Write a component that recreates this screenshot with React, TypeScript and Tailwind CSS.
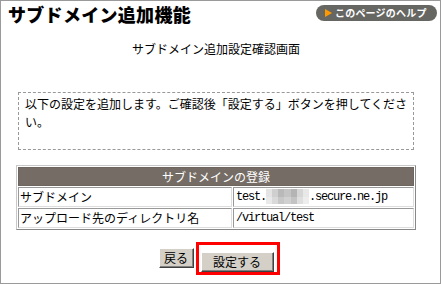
import type { JSX } from "react";

const jp = "font-['Noto_Sans_CJK_JP',sans-serif]";
const mono = "font-['Liberation_Mono','Noto_Sans_CJK_JP',monospace] tracking-[-1.2px]";

const Mosaic = (): JSX.Element => {
  const cols = ["#e4e4e4", "#cfcfcf", "#b9b9b9", "#c4c4c4", "#b4b4b4", "#d6d6d6", "#e8e8e8"];
  return (
    <span className="inline-flex h-[15px] w-[43px] align-middle">
      {cols.map((c, i) => (
        <span key={i} className="flex h-full flex-1 flex-col">
          <span className="flex-1" style={{ backgroundColor: c }} />
          <span className="flex-1 opacity-80" style={{ backgroundColor: c }} />
        </span>
      ))}
    </span>
  );
};

const App = (): JSX.Element => {
  return (
    <div className={`h-[284px] w-[441px] border border-[#9a9a9a] bg-white text-black ${jp}`}>
      <div className="flex items-start justify-between pl-[7px] pr-[3px] pt-[4px]">
        <h1 className="text-[18px] font-black leading-[18px] tracking-[0.3px]">サブドメイン追加機能</h1>
        <a className="flex h-[16px] w-[121px] items-center rounded-full bg-[#666663] pl-[9px] text-[10px] font-bold leading-none tracking-[0.2px] text-white">
          <span className="mr-[3px] h-0 w-0 border-y-[4px] border-l-[7px] border-y-transparent border-l-[#ff9900]" />
          このページのヘルプ
        </a>
      </div>

      <div className="ml-[15px] w-[400px]">
        <p className="mt-[20px] text-center text-[12px] leading-[12px]">サブドメイン追加設定確認画面</p>

        <div className="mx-[2px] mt-[37px] h-[58px] border border-dashed border-[#999] pl-[6px] pr-[3px] pt-[2px] text-[12px] leading-[18px]">
          以下の設定を追加します。ご確認後「設定する」ボタンを押してください。
        </div>

        <table className="mt-[15px] w-full border-separate border-spacing-[1px] border border-t-[#c8c8c8] border-l-[#c8c8c8] border-r-[#888] border-b-[#888] text-[12px]">
          <thead>
            <tr>
              <th colSpan={2} className="h-[19px] border border-[#6e655e] bg-[#756c65] p-0 text-center font-normal leading-[17px] text-white">
                サブドメインの登録
              </th>
            </tr>
          </thead>
          <tbody>
            <tr>
              <td className="h-[20px] w-[214px] border border-t-[#999] border-l-[#999] border-r-[#ddd] border-b-[#ddd] px-[1px] py-0 leading-[18px]">
                サブドメイン
              </td>
              <td className={`h-[20px] border border-t-[#999] border-l-[#999] border-r-[#ddd] border-b-[#ddd] px-[2px] py-0 leading-[18px] ${mono}`}>
                test.<Mosaic />.secure.ne.jp
              </td>
            </tr>
            <tr>
              <td className="h-[20px] border border-t-[#999] border-l-[#999] border-r-[#ddd] border-b-[#ddd] px-[1px] py-0 leading-[18px]">
                アップロード先のディレクトリ名
              </td>
              <td className={`h-[20px] border border-t-[#999] border-l-[#999] border-r-[#ddd] border-b-[#ddd] px-[2px] py-0 leading-[18px] ${mono}`}>
                /virtual/test
              </td>
            </tr>
          </tbody>
        </table>

        <div className="mt-[18px] flex justify-center gap-[7px]">
          <button className="h-[20px] w-[35px] border border-t-white border-l-white border-r-[#404040] border-b-[#404040] bg-[#d4d0c8] p-0 text-[12px] leading-none shadow-[inset_-1px_-1px_0_#808080]">
            戻る
          </button>
          <div className="relative">
            <button className="h-[20px] w-[73px] border border-t-white border-l-white border-r-[#404040] border-b-[#404040] bg-[#d4d0c8] p-0 text-[12px] leading-none shadow-[inset_-1px_-1px_0_#808080]">
              設定する
            </button>
            <span className="pointer-events-none absolute -left-[5px] -top-[6px] h-[33px] w-[84px] border-[3px] border-[#ff0000]" />
          </div>
        </div>
      </div>
    </div>
  );
};

export default App;
